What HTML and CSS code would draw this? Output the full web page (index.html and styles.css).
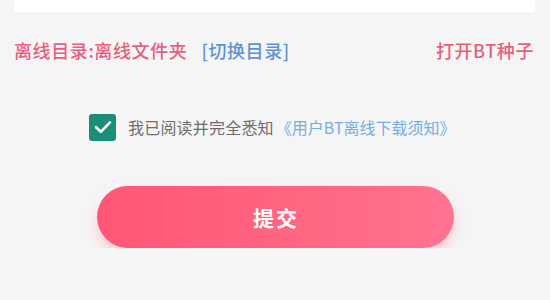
FILE: index.html
```html
<!DOCTYPE html>
<html lang="zh-CN">
<head>
<meta charset="utf-8">
<link rel="stylesheet" href="styles.css">
</head>
<body>
<div class="card"></div>
<div class="dir-row">
  <div class="dir-left">
    <span class="dir-label">离线目录:离线文件夹</span>
    <span class="dir-switch">[切换目录]</span>
  </div>
  <span class="open-bt">打开BT种子</span>
</div>
<div class="agree-row">
  <span class="checkbox">
    <svg width="18" height="14" viewBox="0 0 18 14"><path d="M2 7.2 L6.8 11.8 L16 2.4" fill="none" stroke="#fff" stroke-width="2.6" stroke-linecap="round" stroke-linejoin="round"/></svg>
  </span>
  <span class="agree-text">我已阅读并完全悉知</span>
  <span class="agree-link">《用户BT离线下载须知》</span>
</div>
<div class="submit-wrap">
  <button class="submit">提交</button>
</div>
</body>
</html>
```
FILE: styles.css
```css
html, body {
  margin: 0;
  padding: 0;
  background: #f5f5f5;
  font-family: "Noto Sans CJK SC", "Noto Sans", sans-serif;
}
.card {
  height: 12px;
  margin: 0 15px 0 14px;
  background: #ffffff;
}
.dir-row {
  display: flex;
  justify-content: space-between;
  align-items: center;
  margin-top: 26px;
  padding: 0 16px 0 14px;
  height: 24px;
  font-size: 18px;
  line-height: 24px;
  font-weight: 500;
  letter-spacing: 0.6px;
}
.dir-left {
  display: flex;
  gap: 14px;
}
.dir-label, .open-bt {
  color: #e8607f;
}
.dir-switch {
  color: #5f92d2;
}
.agree-row {
  display: flex;
  align-items: center;
  margin-top: 51px;
  padding-left: 89px;
  height: 28px;
  font-size: 16px;
  line-height: 28px;
}
.checkbox {
  width: 27px;
  height: 27px;
  border-radius: 3px;
  background: #1b8e78;
  display: flex;
  align-items: center;
  justify-content: center;
  margin-right: 12px;
}
.agree-text {
  color: #6e6e6e;
  letter-spacing: 0.2px;
}
.agree-link {
  color: #75ade6;
  margin-left: 2px;
}
.submit-wrap {
  display: flex;
  justify-content: center;
  margin-top: 45px;
}
.submit {
  width: 357px;
  height: 62px;
  border: none;
  border-radius: 31px;
  background: linear-gradient(90deg, #ff5676 0%, #ff6783 60%, #ff7390 100%);
  box-shadow: 0 7px 12px rgba(255, 90, 120, 0.28);
  color: #ffffff;
  font-family: "Noto Sans CJK SC", "Noto Sans", sans-serif;
  font-size: 21px;
  font-weight: 700;
  letter-spacing: 2px;
  padding: 0 0 0 2px;
}
```
